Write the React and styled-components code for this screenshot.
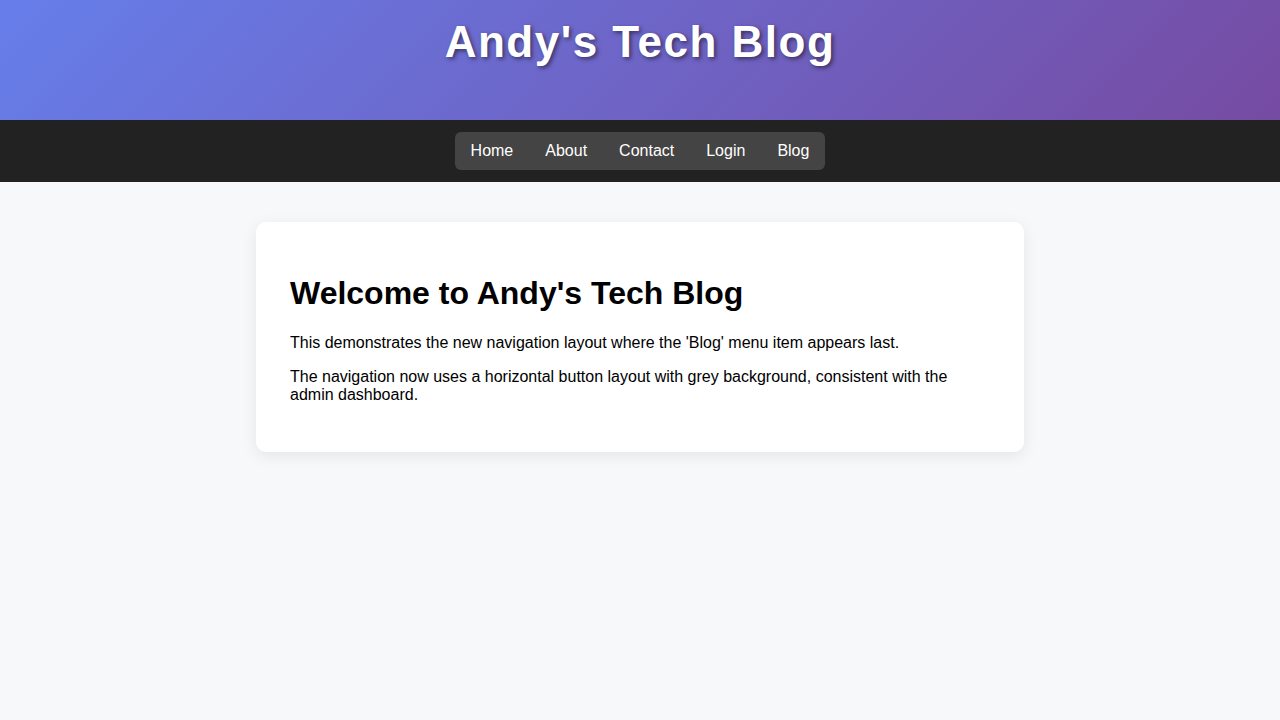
import React from "react";
import styled, { createGlobalStyle } from "styled-components";

const GlobalStyle = createGlobalStyle`
  html, body {
    margin: 0;
    padding: 0;
    background: #f7f8fa;
    font-family: "Liberation Sans", Arial, sans-serif;
    color: #000;
  }
`;

const Header = styled.header`
  box-sizing: border-box;
  height: 120px;
  padding-top: 17px;
  background: linear-gradient(135deg, #667eea 0%, #764ba2 100%);
  text-align: center;
`;

const Title = styled.h1`
  margin: 0;
  font-size: 44px;
  font-weight: bold;
  letter-spacing: 1.5px;
  color: #fff;
  text-shadow: 2px 2px 4px rgba(0, 0, 0, 0.5);
`;

const NavBar = styled.nav`
  background: #222;
  padding: 12px 0;
  display: flex;
  justify-content: center;
`;

const NavGroup = styled.div`
  display: flex;
  background: #444;
  border-radius: 6px;
`;

const NavLink = styled.a`
  padding: 10px 16px;
  font-size: 16px;
  line-height: 18px;
  color: #fff;
  text-decoration: none;
  cursor: pointer;
`;

const Main = styled.main`
  padding: 40px 0;
`;

const Card = styled.section`
  box-sizing: border-box;
  width: 768px;
  margin: 0 auto;
  padding: 32px 34px;
  background: #fff;
  border-radius: 10px;
  box-shadow: 0 4px 16px rgba(0, 0, 0, 0.08);
`;

const Heading = styled.h2`
  font-size: 32px;
  font-weight: bold;
  margin: 0.67em 0;
`;

const Text = styled.p`
  font-size: 16px;
  margin: 16px 0;
`;

const links = ["Home", "About", "Contact", "Login", "Blog"];

const App = () => {
  return (
    <>
      <GlobalStyle />
      <Header>
        <Title>Andy's Tech Blog</Title>
      </Header>
      <NavBar>
        <NavGroup>
          {links.map((l) => (
            <NavLink key={l}>{l}</NavLink>
          ))}
        </NavGroup>
      </NavBar>
      <Main>
        <Card>
          <Heading>Welcome to Andy's Tech Blog</Heading>
          <Text>
            This demonstrates the new navigation layout where the 'Blog' menu
            item appears last.
          </Text>
          <Text>
            The navigation now uses a horizontal button layout with grey
            background, consistent with the admin dashboard.
          </Text>
        </Card>
      </Main>
    </>
  );
};

export default App;
